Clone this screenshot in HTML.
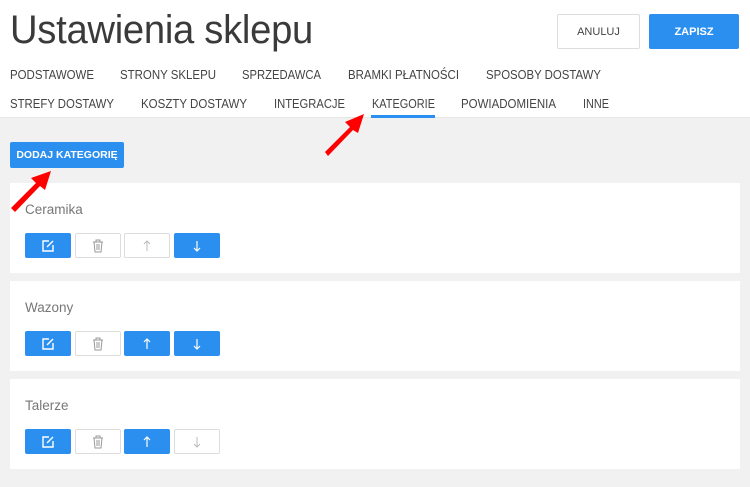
<!DOCTYPE html>
<html><head><meta charset="utf-8"><style>
*{margin:0;padding:0;box-sizing:border-box}
body{width:750px;height:487px;background:#f1f1f1;font-family:"Liberation Sans",sans-serif;position:relative;overflow:hidden}
.hdr{position:absolute;left:0;top:0;width:750px;height:118px;background:#fff;border-bottom:1px solid #e6e6e6}
h1{position:absolute;left:10px;top:8px;font-weight:normal;font-size:40px;color:#3a3a3a;letter-spacing:-0.3px;transform:scaleX(0.955);transform-origin:left}
.btn{position:absolute;display:flex;align-items:center;justify-content:center;font-size:11px;border-radius:2px}
.card{position:absolute;left:10px;width:730px;height:90px;background:#fff}
.card .t{position:absolute;left:15px;top:19px;font-size:13.5px;color:#777}
.b{position:absolute;top:50px;width:46px;height:25px;border-radius:2px;display:flex;align-items:center;justify-content:center}
.bl{background:#2b8ff0}
.wh{background:#fff;border:1px solid #ddd}
</style></head><body>
<div class="hdr">
<h1>Ustawienia sklepu</h1>
<div class="btn" style="left:557px;top:14px;width:83px;height:35px;border:1px solid #ddd;color:#444">ANULUJ</div>
<div class="btn" style="left:649px;top:14px;width:90px;height:35px;background:#2b8ff0;color:#fff;font-weight:bold">ZAPISZ</div>
<svg width="750" height="118" style="position:absolute;left:0;top:0" font-family="Liberation Sans" font-size="12.5" fill="#444">
<text x="10" y="79" textLength="84" lengthAdjust="spacingAndGlyphs">PODSTAWOWE</text>
<text x="120" y="79" textLength="96" lengthAdjust="spacingAndGlyphs">STRONY SKLEPU</text>
<text x="242" y="79" textLength="79" lengthAdjust="spacingAndGlyphs">SPRZEDAWCA</text>
<text x="348" y="79" textLength="111" lengthAdjust="spacingAndGlyphs">BRAMKI PŁATNOŚCI</text>
<text x="486" y="79" textLength="115" lengthAdjust="spacingAndGlyphs">SPOSOBY DOSTAWY</text>
<text x="10" y="108" textLength="104" lengthAdjust="spacingAndGlyphs">STREFY DOSTAWY</text>
<text x="141" y="108" textLength="106" lengthAdjust="spacingAndGlyphs">KOSZTY DOSTAWY</text>
<text x="274" y="108" textLength="71" lengthAdjust="spacingAndGlyphs">INTEGRACJE</text>
<text x="372" y="108" textLength="63" lengthAdjust="spacingAndGlyphs">KATEGORIE</text>
<text x="461" y="108" textLength="95" lengthAdjust="spacingAndGlyphs">POWIADOMIENIA</text>
<text x="583" y="108" textLength="26" lengthAdjust="spacingAndGlyphs">INNE</text>
<rect x="371" y="115" width="64" height="3" fill="#2b8ff0"/>
</svg>
</div>
<div class="btn" style="left:10px;top:142px;width:114px;height:26px;background:#2b8ff0;color:#fff;font-weight:bold;font-size:10.5px">DODAJ KATEGORIĘ</div>

<div class="card" style="top:183px"><div class="t">Ceramika</div>
<div class="b bl" style="left:15px"><svg width="14" height="14" viewBox="0 0 14 14" fill="none" stroke="#fff" stroke-width="1.4"><path d="M8 2H2v10h10V6"/><path d="M6 8l6-6"/></svg></div>
<div class="b wh" style="left:65px"><svg width="12" height="14" viewBox="0 0 12 14" fill="none" stroke="#999" stroke-width="1"><path d="M1 3h10M4 3V1h4v2M2 3l1 10h6l1-10M5 5v6M7 5v6"/></svg></div>
<div class="b wh" style="left:114px"><svg width="10" height="12" viewBox="0 0 10 12" fill="none" stroke="#bbb" stroke-width="1"><path d="M5 11V1M2 4l3-3 3 3"/></svg></div>
<div class="b bl" style="left:164px"><svg width="10" height="12" viewBox="0 0 10 12" fill="none" stroke="#fff" stroke-width="1.2"><path d="M5 1v10M2 8l3 3 3-3"/></svg></div>
</div>
<div class="card" style="top:281px"><div class="t">Wazony</div>
<div class="b bl" style="left:15px"><svg width="14" height="14" viewBox="0 0 14 14" fill="none" stroke="#fff" stroke-width="1.4"><path d="M8 2H2v10h10V6"/><path d="M6 8l6-6"/></svg></div>
<div class="b wh" style="left:65px"><svg width="12" height="14" viewBox="0 0 12 14" fill="none" stroke="#999" stroke-width="1"><path d="M1 3h10M4 3V1h4v2M2 3l1 10h6l1-10M5 5v6M7 5v6"/></svg></div>
<div class="b bl" style="left:114px"><svg width="10" height="12" viewBox="0 0 10 12" fill="none" stroke="#fff" stroke-width="1.2"><path d="M5 11V1M2 4l3-3 3 3"/></svg></div>
<div class="b bl" style="left:164px"><svg width="10" height="12" viewBox="0 0 10 12" fill="none" stroke="#fff" stroke-width="1.2"><path d="M5 1v10M2 8l3 3 3-3"/></svg></div>
</div>
<div class="card" style="top:379px"><div class="t">Talerze</div>
<div class="b bl" style="left:15px"><svg width="14" height="14" viewBox="0 0 14 14" fill="none" stroke="#fff" stroke-width="1.4"><path d="M8 2H2v10h10V6"/><path d="M6 8l6-6"/></svg></div>
<div class="b wh" style="left:65px"><svg width="12" height="14" viewBox="0 0 12 14" fill="none" stroke="#999" stroke-width="1"><path d="M1 3h10M4 3V1h4v2M2 3l1 10h6l1-10M5 5v6M7 5v6"/></svg></div>
<div class="b bl" style="left:114px"><svg width="10" height="12" viewBox="0 0 10 12" fill="none" stroke="#fff" stroke-width="1.2"><path d="M5 11V1M2 4l3-3 3 3"/></svg></div>
<div class="b wh" style="left:164px"><svg width="10" height="12" viewBox="0 0 10 12" fill="none" stroke="#bbb" stroke-width="1"><path d="M5 1v10M2 8l3 3 3-3"/></svg></div>
</div>

<svg width="750" height="487" style="position:absolute;left:0;top:0">
<g fill="#f00" stroke="none">
<path d="M325 152 L350 127 L345 122 L364 114 L358 133 L353 130 L328 156 Z"/>
<path d="M11 208 L36 183 L31 178 L51 171 L45 190 L40 186 L15 212 Z"/>
</g>
</svg>
</body></html>
